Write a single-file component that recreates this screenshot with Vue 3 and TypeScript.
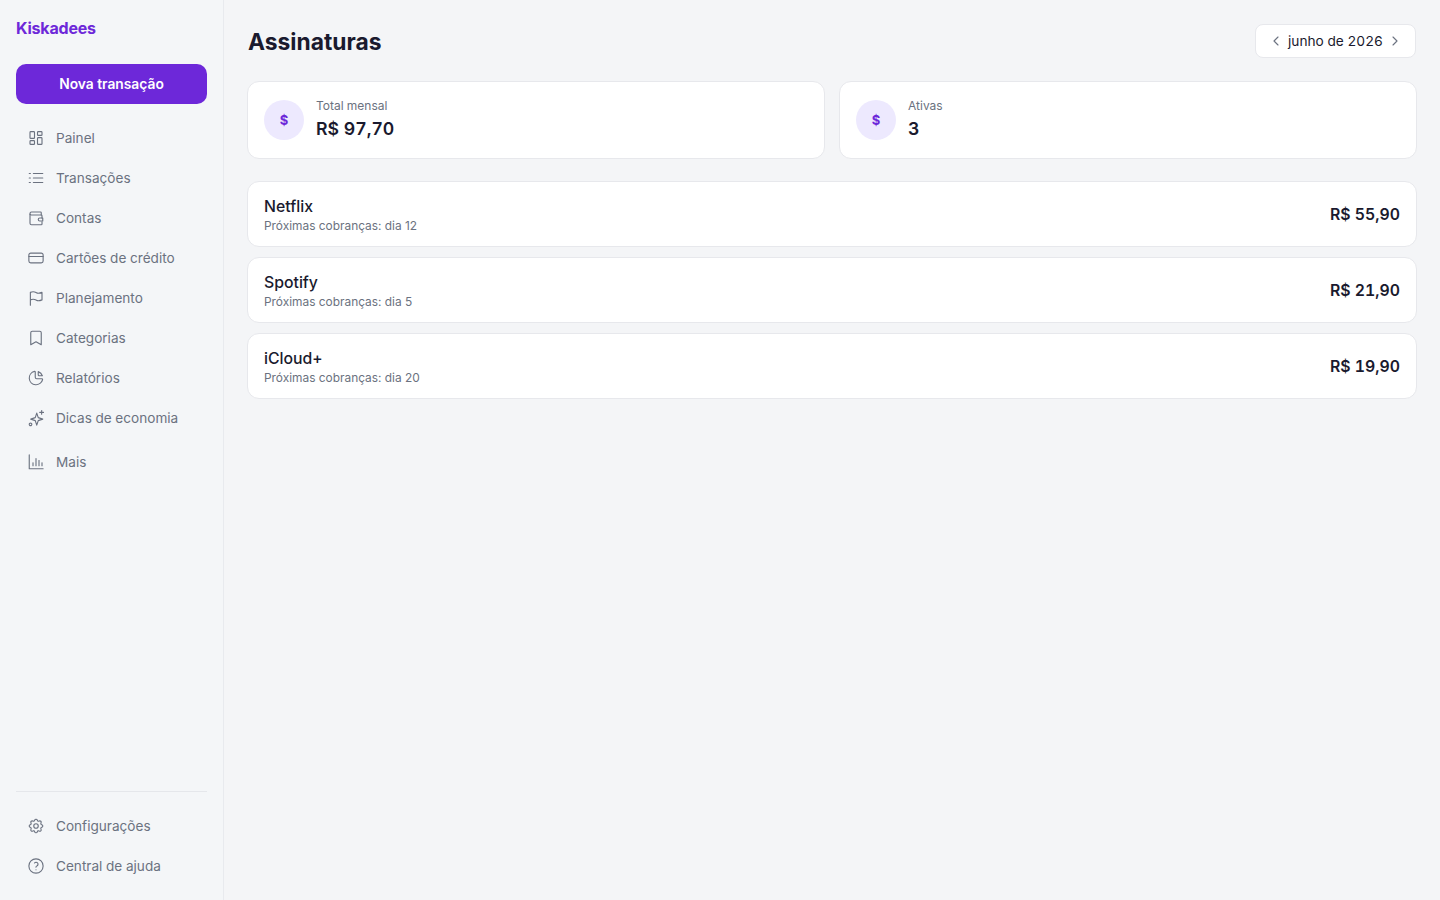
<script setup lang="ts">
interface NavItem {
  label: string
  icon: string
}

const mainNav: NavItem[] = [
  { label: 'Painel', icon: 'grid' },
  { label: 'Transações', icon: 'list' },
  { label: 'Contas', icon: 'wallet' },
  { label: 'Cartões de crédito', icon: 'card' },
  { label: 'Planejamento', icon: 'flag' },
  { label: 'Categorias', icon: 'bookmark' },
  { label: 'Relatórios', icon: 'pie' },
  { label: 'Dicas de economia', icon: 'sparkles' },
]

const footerNav: NavItem[] = [
  { label: 'Configurações', icon: 'gear' },
  { label: 'Central de ajuda', icon: 'help' },
]

const summary = [
  { label: 'Total mensal', value: 'R$ 97,70' },
  { label: 'Ativas', value: '3' },
]

const subscriptions = [
  { name: 'Netflix', day: 12, price: 'R$ 55,90' },
  { name: 'Spotify', day: 5, price: 'R$ 21,90' },
  { name: 'iCloud+', day: 20, price: 'R$ 19,90' },
]

const iconPaths: Record<string, string[]> = {
  grid: [
    'M5 3.500h4a1 1 0 0 1 1 1v7a1 1 0 0 1-1 1H5a1 1 0 0 1-1-1v-7a1 1 0 0 1 1-1z',
    'M15 3.500h4a1 1 0 0 1 1 1v3a1 1 0 0 1-1 1h-4a1 1 0 0 1-1-1v-3a1 1 0 0 1 1-1z',
    'M15 11.500h4a1 1 0 0 1 1 1v7a1 1 0 0 1-1 1h-4a1 1 0 0 1-1-1v-7a1 1 0 0 1 1-1z',
    'M5 15.500h4a1 1 0 0 1 1 1v3a1 1 0 0 1-1 1H5a1 1 0 0 1-1-1v-3a1 1 0 0 1 1-1z',
  ],
  list: ['M8.500 6H21', 'M8.500 12H21', 'M8.500 18H21', 'M3 6h1.500', 'M3 12h1.500', 'M3 18h1.500'],
  wallet: [
    'M19 8V5a1 1 0 0 0-1-1H6a2 2 0 0 0-2 2v13a2 2 0 0 0 2 2h13a1 1 0 0 0 1-1v-3',
    'M4 7a2 2 0 0 0 2 1h13a1 1 0 0 1 1 1v3',
    'M21 12v4h-4a2 2 0 0 1 0-4z',
  ],
  card: ['M5 5.500h14a2.500 2.500 0 0 1 2.500 2.500v8a2.500 2.500 0 0 1-2.500 2.500H5A2.500 2.500 0 0 1 2.500 16V8A2.500 2.500 0 0 1 5 5.500z', 'M2.500 10h19'],
  flag: ['M4.500 21.500V4.500c4.500-2 7 0 8 .5s4 1 7.500-.5v10c-3.500 1.500-6.500 1-7.500.5s-3.500-2.500-8-.5'],
  bookmark: ['M19 21l-7-4-7 4V5a2 2 0 0 1 2-2h10a2 2 0 0 1 2 2z'],
  pie: [
    'M10 3.200a9 9 0 1 0 10.800 10.800a1 1 0 0 0-1-1h-6.800a2 2 0 0 1-2-2V4a.9.9 0 0 0-1-.8z',
    'M15 3.500a9 9 0 0 1 5.500 5.500h-4.500a1 1 0 0 1-1-1z',
  ],
  sparkles: [
    'M13 5.500l2 6 6 2-6 2-2 6-2-6-6-2 6-2z',
    'M19.500 2v5',
    'M17 4.500h5',
    'M3 20.500a1.700 1.700 0 1 0 3.400 0a1.700 1.700 0 1 0-3.400 0',
  ],
  gear: [
    'M10.300 4.300c.4-1.800 3-1.800 3.400 0a1.700 1.700 0 0 0 2.600 1.100c1.500-.9 3.300.8 2.400 2.400a1.700 1.700 0 0 0 1 2.500c1.800.4 1.800 3 0 3.400a1.700 1.700 0 0 0-1 2.600c.9 1.500-.9 3.300-2.400 2.400a1.700 1.700 0 0 0-2.600 1c-.4 1.800-3 1.800-3.400 0a1.700 1.700 0 0 0-2.600-1c-1.500.9-3.300-.9-2.400-2.400a1.700 1.700 0 0 0-1-2.600c-1.800-.4-1.800-3 0-3.400a1.700 1.700 0 0 0 1-2.500c-.9-1.600.9-3.300 2.400-2.400 1 .6 2.300.1 2.600-1.100z',
    'M9 12a3 3 0 1 0 6 0a3 3 0 1 0-6 0',
  ],
  help: ['M2.500 12a9.500 9.500 0 1 0 19 0a9.500 9.500 0 1 0-19 0', 'M12 17v.01', 'M12 13.500a1.500 1.500 0 0 1 1-1.500a2.600 2.600 0 1 0-3-4'],
  chart: ['M3 2.500V21h18.500', 'M8 17v-4', 'M12 17V7.500', 'M16 17v-7', 'M20 17v-4'],
}
</script>

<template>
  <div class="app">
    <aside class="sidebar">
      <div class="logo">Kiskadees</div>
      <button class="new-btn" type="button">Nova transação</button>

      <nav class="nav">
        <a v-for="item in mainNav" :key="item.label" class="nav-item">
          <svg class="nav-icon" viewBox="0 0 24 24">
            <path v-for="d in iconPaths[item.icon]" :key="d" :d="d" />
          </svg>
          <span>{{ item.label }}</span>
        </a>
        <a class="nav-item more">
          <svg class="nav-icon" viewBox="0 0 24 24">
            <path v-for="d in iconPaths.chart" :key="d" :d="d" />
          </svg>
          <span>Mais</span>
        </a>
      </nav>

      <div class="sidebar-footer">
        <a v-for="item in footerNav" :key="item.label" class="nav-item">
          <svg class="nav-icon" viewBox="0 0 24 24">
            <path v-for="d in iconPaths[item.icon]" :key="d" :d="d" />
          </svg>
          <span>{{ item.label }}</span>
        </a>
      </div>
    </aside>

    <main class="main">
      <header class="header">
        <h1>Assinaturas</h1>
        <div class="month-picker">
          <svg class="chevron" viewBox="0 0 24 24"><path d="M15 6l-6 6 6 6" /></svg>
          <span>junho de 2026</span>
          <svg class="chevron" viewBox="0 0 24 24"><path d="M9 6l6 6-6 6" /></svg>
        </div>
      </header>

      <section class="summary">
        <div v-for="card in summary" :key="card.label" class="summary-card">
          <div class="badge">$</div>
          <div>
            <div class="summary-label">{{ card.label }}</div>
            <div class="summary-value">{{ card.value }}</div>
          </div>
        </div>
      </section>

      <section class="rows">
        <div v-for="sub in subscriptions" :key="sub.name" class="row">
          <div>
            <div class="row-name">{{ sub.name }}</div>
            <div class="row-sub">Próximas cobranças: dia {{ sub.day }}</div>
          </div>
          <div class="row-price">{{ sub.price }}</div>
        </div>
      </section>
    </main>
  </div>
</template>

<style scoped>
.app {
  display: flex;
  height: 900px;
  background: #f4f5f7;
  color: #1a1a2e;
  font-family: Inter, "Liberation Sans", sans-serif;
  font-variant-numeric: tabular-nums;
}

.sidebar {
  display: flex;
  flex-direction: column;
  flex-shrink: 0;
  box-sizing: border-box;
  width: 224px;
  padding: 16px 16px 14px;
  background: #f4f6f8;
  border-right: 1px solid #e8eaee;
}

.logo {
  height: 24px;
  font-size: 16px;
  line-height: 24px;
  font-weight: 700;
  letter-spacing: -0.2px;
  color: #6d28d9;
}

.new-btn {
  height: 40px;
  margin-top: 24px;
  padding: 0;
  border: 0;
  border-radius: 10px;
  background: #6d28d9;
  color: #fff;
  font-family: inherit;
  font-size: 13.8px;
  font-weight: 600;
}

.nav {
  display: flex;
  flex-direction: column;
  flex: 1;
  margin-top: 14px;
}

.nav-item {
  display: flex;
  align-items: center;
  gap: 11px;
  height: 40px;
  padding-left: 11px;
  font-size: 13.6px;
  color: #6b7280;
}

.more {
  margin-top: 4px;
}

.nav-icon {
  width: 18px;
  height: 18px;
  flex-shrink: 0;
  fill: none;
  stroke: #6b7280;
  stroke-width: 1.5;
  stroke-linecap: round;
  stroke-linejoin: round;
}

.sidebar-footer {
  padding-top: 14px;
  border-top: 1px solid #e5e7eb;
}

.main {
  flex: 1;
  min-width: 0;
  padding: 24px 23px;
}

.header {
  display: flex;
  align-items: center;
  justify-content: space-between;
  height: 34px;
  padding: 0 1px;
}

h1 {
  margin: 0;
  padding-top: 1px;
  font-size: 22.8px;
  font-weight: 700;
}

.month-picker {
  display: flex;
  align-items: center;
  gap: 4px;
  box-sizing: border-box;
  height: 34px;
  padding: 0 12px;
  background: #fff;
  border: 1px solid #e7e8ec;
  border-radius: 8px;
  font-size: 13.7px;
}

.chevron {
  width: 16px;
  height: 16px;
  fill: none;
  stroke: #6b7280;
  stroke-width: 1.7;
  stroke-linecap: round;
  stroke-linejoin: round;
}

.summary {
  display: grid;
  grid-template-columns: 1fr 1fr;
  gap: 14px;
  margin-top: 23px;
}

.summary-card {
  display: flex;
  align-items: center;
  gap: 12px;
  box-sizing: border-box;
  height: 78px;
  padding: 0 16px;
  background: #fff;
  border: 1px solid #e7e8ec;
  border-radius: 12px;
}

.badge {
  display: grid;
  place-items: center;
  width: 40px;
  height: 40px;
  padding-bottom: 1px;
  box-sizing: border-box;
  border-radius: 50%;
  background: #ede9fe;
  color: #6d28d9;
  font-size: 13px;
  font-weight: 700;
}

.summary-label {
  font-size: 12px;
  line-height: 16px;
  color: #6b7280;
}

.summary-value {
  margin-bottom: -1px;
  padding-top: 1px;
  font-size: 17.7px;
  line-height: 28px;
  font-weight: 600;
}

.rows {
  display: flex;
  flex-direction: column;
  gap: 10px;
  margin-top: 22px;
}

.row {
  display: flex;
  align-items: center;
  justify-content: space-between;
  box-sizing: border-box;
  height: 66px;
  padding: 0 16px;
  background: #fff;
  border: 1px solid #e7e8ec;
  border-radius: 12px;
}

.row-name {
  padding-top: 1px;
  font-size: 15.8px;
  line-height: 22px;
  font-weight: 450;
}

.row-sub {
  margin-bottom: -1px;
  font-size: 11.9px;
  font-variant-numeric: normal;
  line-height: 16px;
  color: #6b7280;
}

.row-price {
  font-size: 15.8px;
  font-weight: 600;
}
</style>
